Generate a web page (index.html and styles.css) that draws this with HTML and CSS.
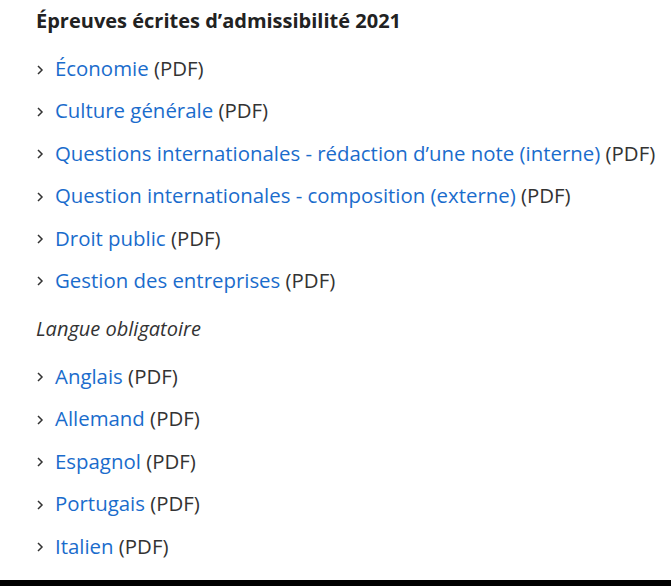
FILE: index.html
```html
<!DOCTYPE html>
<html lang="fr">
<head>
<meta charset="utf-8">
<link rel="stylesheet" href="styles.css">
</head>
<body>
<div class="page">
  <section class="content">
    <h2 class="title">Épreuves écrites d’admissibilité 2021</h2>
    <ul class="list first">
      <li class="item"><svg class="chev" viewBox="0 0 8 12"><path d="M2 2l4 4-4 4"/></svg><span class="label"><a class="link" href="#">Économie</a> (PDF)</span></li>
      <li class="item"><svg class="chev" viewBox="0 0 8 12"><path d="M2 2l4 4-4 4"/></svg><span class="label"><a class="link" href="#">Culture générale</a> (PDF)</span></li>
      <li class="item"><svg class="chev" viewBox="0 0 8 12"><path d="M2 2l4 4-4 4"/></svg><span class="label"><a class="link" href="#">Questions internationales - rédaction d’une note (interne)</a> (PDF)</span></li>
      <li class="item"><svg class="chev" viewBox="0 0 8 12"><path d="M2 2l4 4-4 4"/></svg><span class="label"><a class="link" href="#">Question internationales - composition (externe)</a> (PDF)</span></li>
      <li class="item"><svg class="chev" viewBox="0 0 8 12"><path d="M2 2l4 4-4 4"/></svg><span class="label"><a class="link" href="#">Droit public</a> (PDF)</span></li>
      <li class="item"><svg class="chev" viewBox="0 0 8 12"><path d="M2 2l4 4-4 4"/></svg><span class="label"><a class="link" href="#">Gestion des entreprises</a> (PDF)</span></li>
    </ul>
    <p class="sub">Langue obligatoire</p>
    <ul class="list">
      <li class="item"><svg class="chev" viewBox="0 0 8 12"><path d="M2 2l4 4-4 4"/></svg><span class="label"><a class="link" href="#">Anglais</a> (PDF)</span></li>
      <li class="item"><svg class="chev" viewBox="0 0 8 12"><path d="M2 2l4 4-4 4"/></svg><span class="label"><a class="link" href="#">Allemand</a> (PDF)</span></li>
      <li class="item"><svg class="chev" viewBox="0 0 8 12"><path d="M2 2l4 4-4 4"/></svg><span class="label"><a class="link" href="#">Espagnol</a> (PDF)</span></li>
      <li class="item"><svg class="chev" viewBox="0 0 8 12"><path d="M2 2l4 4-4 4"/></svg><span class="label"><a class="link" href="#">Portugais</a> (PDF)</span></li>
      <li class="item"><svg class="chev" viewBox="0 0 8 12"><path d="M2 2l4 4-4 4"/></svg><span class="label"><a class="link" href="#">Italien</a> (PDF)</span></li>
    </ul>
  </section>
  <div class="footer-bar"></div>
</div>
</body>
</html>
```
FILE: styles.css
```css
html, body {
  margin: 0;
  padding: 0;
  background: #fff;
}
.page {
  width: 671px;
  height: 586px;
  display: flex;
  flex-direction: column;
  font-family: "Open Sans", "Noto Sans", sans-serif;
  color: #333;
}
.content {
  flex: 1;
  padding: 7px 0 0 36px;
}
.title {
  margin: 0;
  font-size: 20px;
  font-weight: 700;
  line-height: 28px;
  color: #222;
}
.list {
  list-style: none;
  margin: 0;
  padding: 0;
}
.list.first {
  margin-top: 19px;
}
.item {
  display: flex;
  align-items: center;
  font-size: 20.4px;
  line-height: 28px;
  margin-bottom: 14.4px;
  white-space: nowrap;
}
.chev {
  width: 8px;
  height: 12px;
  margin: 3px 11px 0 0;
  fill: none;
  stroke: #333;
  stroke-width: 1.5;
}
.label {
  color: #333;
}
.link {
  color: #1a6ccc;
  text-decoration: none;
}
.sub {
  margin: 21px 0 19px;
  font-size: 20px;
  font-style: italic;
  line-height: 28px;
  color: #333;
}
.footer-bar {
  height: 6px;
  background: #000;
}
```
